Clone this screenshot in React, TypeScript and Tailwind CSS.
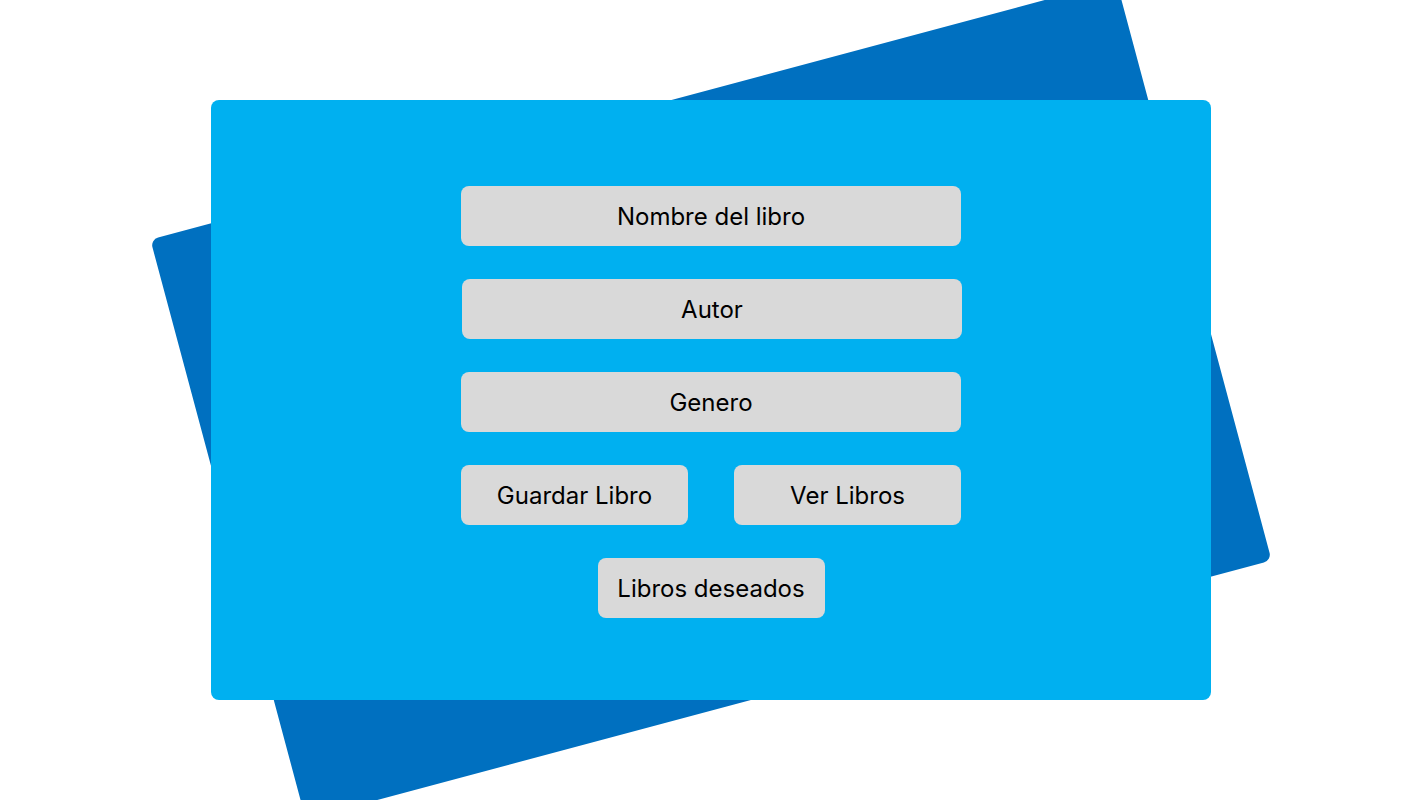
export default function App() {
  const field = "flex h-[60px] w-[500px] items-center justify-center rounded-lg bg-[#d9d9d9] pt-[2px] text-2xl text-black";
  const button = "flex h-[60px] w-[227px] items-center justify-center rounded-lg bg-[#d9d9d9] pt-[2px] text-2xl text-black";

  return (
    <div className="h-screen w-full overflow-hidden bg-white pt-[100px] font-['Inter',sans-serif]">
      <div className="relative mx-auto h-[600px] w-[1000px]">
        {/* tilted backdrop */}
        <div className="absolute inset-0 -rotate-[15deg] rounded-lg bg-[#0070c0]" />

        <div className="relative flex h-full w-full flex-col items-center gap-[33px] rounded-lg bg-[#00b0f0] pt-[86px]">
          <div className={field}>Nombre del libro</div>
          <div className={field + " ml-[2px]"}>Autor</div>
          <div className={field}>Genero</div>
          <div className="flex w-[500px] justify-between">
            <button className={button}>Guardar Libro</button>
            <button className={button}>Ver Libros</button>
          </div>
          <button className={button}>Libros deseados</button>
        </div>
      </div>
    </div>
  );
}
